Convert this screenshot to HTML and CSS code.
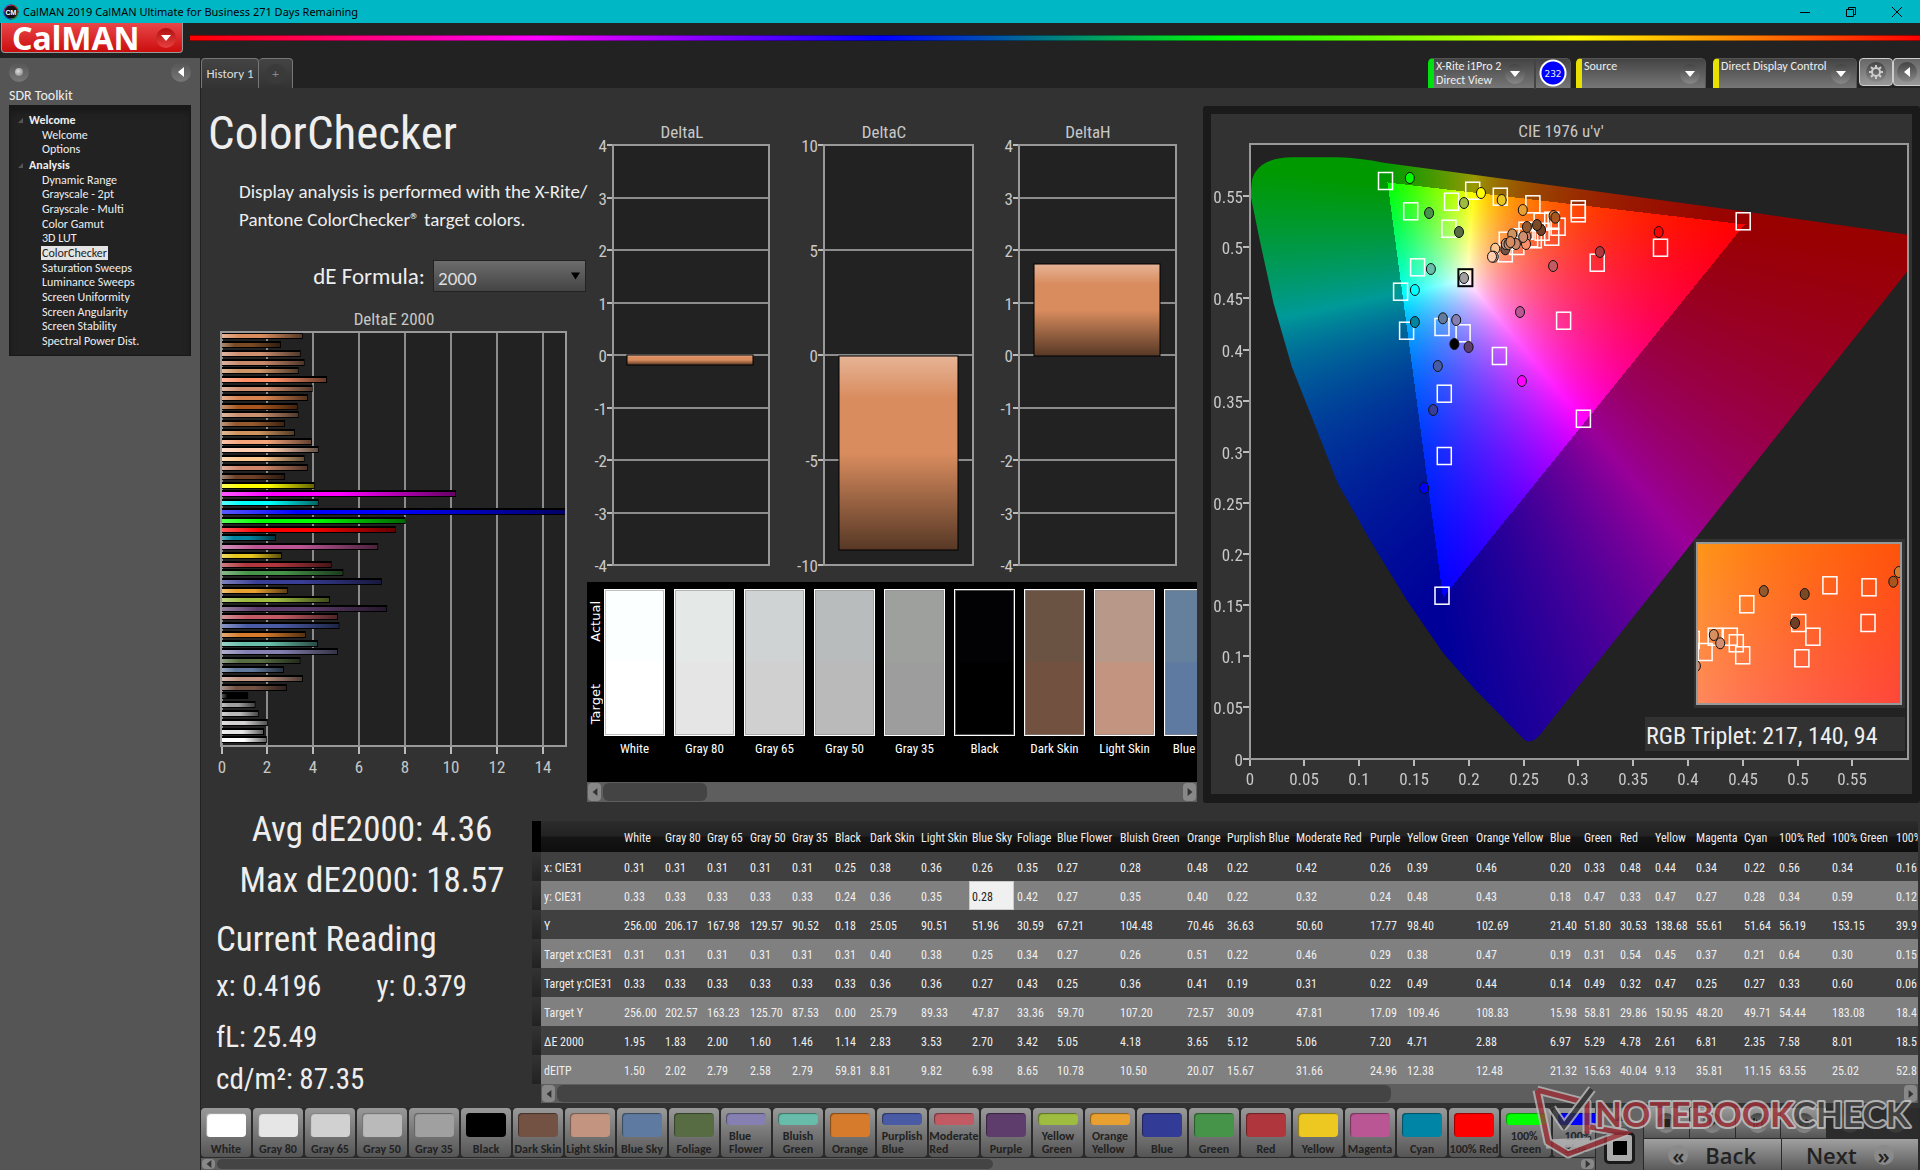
FILE: index.html
```html
<!DOCTYPE html>
<html lang="en">
<head>
<meta charset="utf-8">
<title>CalMAN 2019 CalMAN Ultimate for Business</title>
<link rel="stylesheet" href="styles.css">
</head>
<body>
<div class="app">
  <header class="titlebar">
    <svg class="app-icon" viewBox="0 0 16 16" aria-hidden="true"><circle cx="8" cy="8" r="7.500" fill="#111"/><path d="M1 8a7 7 0 0 1 7-7" stroke="#c33cc8" fill="none"/><path d="M8 1a7 7 0 0 1 7 7" stroke="#d03030" fill="none"/><path d="M15 8a7 7 0 0 1-7 7" stroke="#4a9a3a" fill="none"/><path d="M8 15a7 7 0 0 1-7-7" stroke="#3050d0" fill="none"/><text x="8" y="11" text-anchor="middle" class="icon-text">CM</text></svg>
    <span class="title-text">CalMAN 2019 CalMAN Ultimate for Business 271 Days Remaining</span>
    <div class="window-buttons">
      <button aria-label="Minimize"><svg viewBox="0 0 12 12"><path d="M1 6.500h10"/></svg></button>
      <button aria-label="Restore"><svg viewBox="0 0 12 12"><path d="M1.500 3.500h7v7h-7zM3.500 3.500v-2h7v7h-2"/></svg></button>
      <button aria-label="Close"><svg viewBox="0 0 12 12"><path d="M1 1l10 10M11 1L1 11"/></svg></button>
    </div>
  </header>
  <div class="brand-row">
    <button class="brand"><span>CalMAN</span><i class="round red"><svg viewBox="0 0 10 6"><path d="M0 0h10L5 6z"/></svg></i></button>
    <div class="spectrum"></div>
  </div>
  <div class="body">
    <aside class="sidebar">
      <div class="side-tools"><i class="round"><b class="led"></b></i><button class="round" aria-label="Collapse"><svg class="side-arrow" viewBox="0 0 6 10"><path d="M6 0v10L0 5z"/></svg></button></div>
      <h2>SDR Toolkit</h2>
      <nav class="tree">
        <h3>Welcome</h3>
        <ul><li><a href="#">Welcome</a></li><li><a href="#">Options</a></li></ul>
        <h3>Analysis</h3>
        <ul><li><a href="#">Dynamic Range</a></li><li><a href="#">Grayscale - 2pt</a></li><li><a href="#">Grayscale - Multi</a></li><li><a href="#">Color Gamut</a></li><li><a href="#">3D LUT</a></li><li><a href="#" class="current">ColorChecker</a></li><li><a href="#">Saturation Sweeps</a></li><li><a href="#">Luminance Sweeps</a></li><li><a href="#">Screen Uniformity</a></li><li><a href="#">Screen Angularity</a></li><li><a href="#">Screen Stability</a></li><li><a href="#">Spectral Power Dist.</a></li></ul>
      </nav>
    </aside>
    <main class="main">
      <div class="tabbar">
        <button class="tab">History 1</button><button class="tab add" aria-label="Add history"><i class="round dim">+</i></button>
        <div class="devices">
          <button class="device meter"><span>X-Rite i1Pro 2<br>Direct View</span><i class="round"><svg viewBox="0 0 10 6"><path d="M0 0h10L5 6z"/></svg></i><em>232</em></button>
          <button class="device source"><span>Source</span><i class="round"><svg viewBox="0 0 10 6"><path d="M0 0h10L5 6z"/></svg></i></button>
          <button class="device display"><span>Direct Display Control</span><i class="round"><svg viewBox="0 0 10 6"><path d="M0 0h10L5 6z"/></svg></i></button>
          <button class="square gear" aria-label="Settings"><i class="round"><svg class="gear-icon" viewBox="0 0 16 16"><circle cx="8" cy="8" r="4"/><path d="M8 1v3M8 12v3M1 8h3M12 8h3M3 3l2 2M11 11l2 2M13 3l-2 2M5 11l-2 2"/></svg></i></button>
          <button class="square expand" aria-label="Expand"><i class="round"><svg class="side-arrow" viewBox="0 0 6 10"><path d="M6 0v10L0 5z"/></svg></i></button>
        </div>
      </div>
      <section class="charts">
        <div class="intro">
          <h1>ColorChecker</h1>
          <p>Display analysis is performed with the X-Rite/<br>Pantone ColorChecker® target colors.</p>
          <div class="formula"><label for="formula">dE Formula:</label><div class="select"><select id="formula"><option>2000</option></select><svg viewBox="0 0 10 8"><path d="M0 0h10L5 8z"/></svg></div></div>
          <svg class="chart" id="deltaE" viewBox="201 310 386 476"></svg>
        </div>
        <div class="middle">
          <svg class="chart" id="deltas" viewBox="587 118 616 464"></svg>
          <div class="compare">
            <div class="compare-view">
              <div class="sides"><span>Actual</span><span>Target</span></div>
              <div class="pairs" id="pairs"></div>
            </div>
            <div class="scrollbar tall"><button aria-label="Scroll left"><svg viewBox="0 0 6 10"><path d="M6 0v10L0 5z"/></svg></button><div class="track"><div class="thumb compare-thumb"></div></div><button aria-label="Scroll right"><svg viewBox="0 0 6 10"><path d="M0 0v10L6 5z"/></svg></button></div>
          </div>
        </div>
        <div class="gamut"><svg class="chart" id="cie" viewBox="1203 106 717 697"></svg></div>
      </section>
      <section class="results">
        <div class="readings">
          <div class="totals">Avg dE2000: 4.36<br>Max dE2000: 18.57</div>
          <h2>Current Reading</h2>
          <div class="reading xy"><span>x: 0.4196</span><span>y: 0.379</span></div>
          <div class="reading">fL: 25.49</div>
          <div class="reading last">cd/m²: 87.35</div>
        </div>
        <div class="data">
          <div class="row-heads"></div>
          <div class="table-view">
            <div class="table-clip"><table id="table"></table></div>
            <div class="scrollbar"><button aria-label="Scroll left"><svg viewBox="0 0 6 10"><path d="M6 0v10L0 5z"/></svg></button><div class="track"><div class="thumb table-thumb"></div></div><button aria-label="Scroll right"><svg viewBox="0 0 6 10"><path d="M0 0v10L6 5z"/></svg></button></div>
          </div>
        </div>
      </section>
      <footer class="footer">
        <div class="patch-area">
          <div class="patches" id="patches"></div>
          <div class="scrollbar short"><button aria-label="Scroll left"><svg viewBox="0 0 6 10"><path d="M6 0v10L0 5z"/></svg></button><div class="track"><div class="thumb patch-thumb"></div></div><button aria-label="Scroll right"><svg viewBox="0 0 6 10"><path d="M0 0v10L6 5z"/></svg></button></div>
        </div>
        <div class="window-tools"><button class="up" aria-label="Show more"><svg viewBox="0 0 10 6"><path d="M0 6h10L5 0z"/></svg></button><button class="pattern" aria-label="Pattern window"><b></b></button></div>
        <div class="transport">
          <div class="media">
            <button aria-label="Stop"><i class="round"><svg viewBox="0 0 10 10"><path d="M1 1h8v8H1z"/></svg></i></button>
            <button aria-label="Play"><i class="round"><svg viewBox="0 0 10 10"><path d="M2 0l7 5-7 5z"/></svg></i></button>
            <button aria-label="Read series"><i class="round"><svg viewBox="0 0 10 10"><path d="M0 0h2v10H0zM8 0h2v10H8zM3 1l4 4-4 4z"/></svg></i></button>
            <button aria-label="Continuous"><i class="round"><svg viewBox="0 0 10 10"><path d="M0 3l3-2 2 3 2-3 3 2v4L7 9 5 6 3 9 0 7z"/></svg></i></button>
            <button class="off" aria-label="Previous"><i class="round dim"></i></button>
            <button class="off" aria-label="Next reading"><i class="round dim"></i></button>
          </div>
          <div class="steps">
            <button><i class="round">«</i><span>Back</span></button>
            <button><span>Next</span><i class="round">»</i></button>
          </div>
        </div>
        <svg class="watermark" viewBox="1530 1082 390 78" aria-hidden="true">
          <path d="M1537 1090l50 13v31M1537 1090l11 52 20 12 56-21-34-6M1546 1144l44-2" class="mark-halo"/>
          <path d="M1537 1090l50 13v31M1537 1090l11 52 20 12 56-21-34-6" class="mark-red"/>
          <path d="M1552 1108l12 18 28-37" class="mark-halo"/>
          <path d="M1552 1108l12 18 28-37" class="mark-dark"/>
          <text x="1595" y="1127" class="mark-text"><tspan class="nb">NOTEBOOK</tspan><tspan class="ck">CHECK</tspan></text>
        </svg>
      </footer>
    </main>
  </div>
</div>
<script src="script.js"></script>
</body>
</html>
```
FILE: styles.css
```css
* { box-sizing: border-box; }
body { margin: 0; background: #323232; color: #eee; font-family: Carlito, Lato, sans-serif; font-size: 12px; }
button { font: inherit; color: inherit; border: 0; padding: 0; margin: 0; background: none; }
h1, h2, h3, p, ul { margin: 0; padding: 0; font-weight: 400; }
a { color: inherit; text-decoration: none; }
ul { list-style: none; }
i, em { font-style: normal; }
svg { display: block; }
.app { min-height: 100vh; display: flex; flex-direction: column; overflow: hidden; }

.titlebar { height: 23px; background: #00b7c6; color: #000; display: flex; align-items: center; padding-left: 3px; }
.app-icon { width: 16px; height: 16px; }
.icon-text { font: 700 7px "Liberation Sans", sans-serif; fill: #fff; }
.title-text { margin-left: 4px; font: 11px/16px "Noto Sans", sans-serif; flex: 1; }
.window-buttons { display: flex; }
.window-buttons button { width: 46px; height: 23px; display: grid; place-items: center; }
.window-buttons svg { width: 12px; height: 12px; fill: none; stroke: #000; }

.brand-row { height: 35px; background: #222; display: flex; }
.brand { width: 182px; height: 30px; margin: 0 7px 0 1px; background: linear-gradient(#e8474a, #cc0d0d); border: 1px solid #999; border-top: 0; border-radius: 0 0 4px 4px; display: flex; align-items: center; justify-content: space-between; padding: 0 6px 0 10px; }
.brand span { font: 700 32px/28px "Noto Sans", sans-serif; color: #fff; }
.spectrum { flex: 1; height: 6px; margin-top: 12px; background: linear-gradient(90deg, #f00, #f0f, #00f, #0f0, #ff0, #f00); border: solid #0006; border-width: 1px 0; }

.round { width: 20px; height: 20px; border-radius: 50%; background: linear-gradient(#444, #888); display: grid; place-items: center; flex: none; }
.round svg { width: 10px; height: 6px; fill: #fff; }
.round.red { background: linear-gradient(#b01010, #e84040); }
.round.dim { background: #3a3a3a; color: #888; }
.round .side-arrow { width: 6px; height: 10px; }
.led { width: 8px; height: 8px; border-radius: 50%; background: radial-gradient(circle at 40% 40%, #ddd, #777); }

.body { flex: 1; display: flex; }
.sidebar { width: 201px; flex: none; background: #555; border-right: 1px solid #222; padding: 4px 9px 0; }
.side-tools { height: 20px; display: flex; justify-content: space-between; }
.side-tools .round { background: linear-gradient(#555, #777); }
.sidebar h2 { font-size: 14px; line-height: 18px; margin-top: 5px; }
.tree { height: 251px; background: #222; border: 1px solid #181818; box-shadow: inset 0 6px 6px #1118; padding: 6px 0 0 11px; }
.tree h3 { font-size: 12px; line-height: 16px; font-weight: 700; padding-left: 8px; position: relative; }
.tree h3::before { content: ""; position: absolute; left: -3px; top: 6px; border-left: 5px solid transparent; border-bottom: 5px solid #555; }
.tree ul { padding-left: 20px; }
.tree li { height: 15px; line-height: 15px; padding: 0 1px; }
.tree li:nth-child(3n+1) { height: 14px; }
.tree .current { display: inline-block; background: #e4e4e4; color: #222; padding: 0 1px; margin-left: -1px; line-height: 14px; }

.main { flex: 1; min-width: 0; display: flex; flex-direction: column; }
.tabbar { height: 30px; background: #222; display: flex; }
.tab { width: 58px; background: linear-gradient(#444, #333); border: 1px solid #777; border-bottom: 0; border-radius: 4px 4px 0 0; font-size: 13px; color: #ddd; }
.tab.add { width: 34px; display: grid; place-items: center; border-left: 0; }
.devices { margin-left: auto; display: flex; }
.device { display: flex; text-align: left; background: linear-gradient(#444, #777); border: 1px solid #555; border-bottom: 0; border-left: 6px solid #e8e000; border-radius: 5px 5px 0 0; margin-right: 7px; align-items: center; line-height: 14px; font-size: 12px; }
.device span { flex: 1; align-self: start; padding-left: 2px; white-space: nowrap; }
.device .round { margin-right: 5px; }
.meter { width: 143px; border-left-color: #00e010; margin-right: 5px; }
.meter .round { margin-right: 9px; }
.meter em { width: 36px; height: 30px; border-left: 2px solid #444; display: grid; place-items: center; background: radial-gradient(circle at 17px 14px, #00f 11px, #fff 12px, #fff 13px, transparent 14px); font: 9px "DejaVu Sans", sans-serif; }
.source { width: 130px; }
.display { width: 144px; margin-right: 2px; }
.square { width: 34px; height: 28px; background: linear-gradient(#666, #999); border: 1px solid #ccc; border-radius: 4px; display: grid; place-items: center; }
.expand { width: 27px; border-right: 0; border-radius: 4px 0 0 4px; }
.round .gear-icon { width: 16px; height: 16px; fill: none; stroke: #ccc; stroke-width: 2; }

.charts { display: grid; grid-template-columns: minmax(0, 386fr) minmax(0, 616fr) minmax(0, 717fr); }
.chart { width: 100%; height: auto; }
.intro { padding-top: 15px; }
.intro h1 { font: 47px/60px "Roboto Condensed", sans-serif; padding-left: 7px; }
.intro p { font-size: 19px; line-height: 28px; padding: 15px 0 0 38px; white-space: nowrap; }
.formula { display: flex; justify-content: flex-end; align-items: center; gap: 8px; height: 32px; margin: 26px 1px 18px 0; }
.formula label { font-size: 23px; }
.select { width: 153px; height: 32px; position: relative; }
.select select { appearance: none; width: 100%; height: 100%; background: linear-gradient(#6c6c6c, #444); border: 1px solid #222; color: #ddd; font: 19px Carlito, sans-serif; padding: 4px 4px 0; }
.select svg { position: absolute; right: 6px; top: 12px; width: 9px; height: 8px; }

.panel { fill: #323232; }
.plot { fill: #222; }
.grid { stroke: #8c8c8c; stroke-width: 2; }
.frame { fill: none; stroke: #999; stroke-width: 2; }
.tick { stroke: #bbb; stroke-width: 2; }
.label { font: 17px "Roboto Condensed", sans-serif; fill: #c8c8c8; }
.triplet { font: 24px "Roboto Condensed", sans-serif; fill: #eee; }
.end { text-anchor: end; }
.mid { text-anchor: middle; }
.target { fill: none; stroke: #fff; stroke-width: 1.500px; }
.target.white { stroke: #000; stroke-width: 2px; }
.actual { stroke: #111; stroke-width: 1px; }

.middle { padding-top: 30px; }
.compare { margin-right: 6px; background: #000; }
.compare-view { height: 200px; display: flex; overflow: hidden; padding-top: 7px; }
.sides { width: 17px; height: 147px; padding: 12px 0; flex: none; display: flex; flex-direction: column; justify-content: space-between; align-items: center; }
.sides span { writing-mode: vertical-rl; transform: rotate(180deg); font: 13px/16px "DejaVu Sans", sans-serif; color: #fff; }
.pairs { display: flex; gap: 9px; overflow: hidden; }
.pair { width: 61px; flex: none; text-align: center; font: 13px/26px "Roboto Condensed", sans-serif; color: #fff; white-space: nowrap; }
.pair div { height: 147px; border: 1px solid #fff; outline: 1px solid #8888; outline-offset: -2px; }

.scrollbar { height: 19px; background: #5e5e5e; display: flex; align-items: center; padding: 1px; gap: 2px; }
.scrollbar.tall { height: 20px; }
.scrollbar.short { height: 12px; }
.scrollbar button { width: 13px; height: 100%; background: #888; border-radius: 4px; display: grid; place-items: center; }
.scrollbar svg { height: 8px; width: 6px; fill: #333; }
.track { flex: 1; height: 100%; }
.thumb { height: 100%; background: #444; border-radius: 6px; }
.compare-thumb { width: 18%; }
.table-thumb { width: 62%; }
.patch-thumb { width: 57%; }

.gamut { padding-top: 18px; }
.results { flex: 1; display: flex; }
.readings { width: 331px; flex: none; padding: 1px 0 0 15px; font: 29px/40px "Roboto Condensed", sans-serif; }
.totals { font-size: 35px; line-height: 51px; text-align: center; margin-left: -4px; }
.readings h2 { font-size: 35px; line-height: 44px; margin-top: 12px; }
.reading { margin-top: 11px; }
.reading.xy { display: flex; gap: 55px; margin-top: 4px; }
.reading.last { margin-top: 2px; }
.data { flex: 1; min-width: 0; display: flex; padding: 18px 2px 0 0; }
.row-heads { width: 9px; height: 263px; background: linear-gradient(#000 31px, transparent 31px), repeating-linear-gradient(#333 31px, #222 60px); }
.table-view { flex: 1; min-width: 0; }
.table-clip { overflow: hidden; background: linear-gradient(#2c2c2c, #222 15px, #141414 16px, #0e0e0e 31px); }
table { table-layout: fixed; border-collapse: collapse; font: 12px/16px "Roboto Condensed", sans-serif; }
th, td { padding: 2px 0 0 3px; text-align: left; font-weight: 400; white-space: nowrap; height: 29px; }
thead th { height: 31px; }
tbody tr { background: #404040; }
tbody tr:nth-child(even) { background: #808080; }
tbody .selected { background: #f0f0f0; color: #222; box-shadow: inset 0 0 0 1px #ccc; }

.footer { display: flex; height: 62px; position: relative; background: #2a2a2a; }
.patch-area { flex: 1; min-width: 0; }
.patches { display: flex; gap: 2px; height: 50px; overflow: hidden; }
.patch { width: 50px; height: 49px; flex: none; padding: 5px 0 1px; border-radius: 4px; background: linear-gradient(#999, #555); color: #222; font-weight: 700; font-size: 12px; line-height: 13px; display: flex; flex-direction: column; align-items: center; justify-content: space-between; text-align: left; white-space: nowrap; }
.patch i { width: 40px; height: 24px; border-radius: 4px; box-shadow: inset 1px 1px 1px #0006; }
.patch.two i { height: 12px; }
.window-tools { width: 49px; background: #555; border: solid #2a2a2a; border-width: 0 1px; display: flex; flex-direction: column; align-items: center; gap: 5px; padding-bottom: 6px; }
.up { width: 100%; height: 19px; background: #666; display: grid; place-items: center; }
.up svg { width: 10px; height: 6px; fill: #222; }
.pattern { width: 31px; height: 32px; border: 3px solid #1a1a1a; border-radius: 5px; background: #aaa; display: grid; place-items: center; }
.pattern b { width: 14px; height: 14px; background: #000; }
.transport { width: 276px; padding-right: 2px; }
.media { display: grid; grid-template-columns: repeat(6, 1fr); gap: 1px; height: 30px; }
.media button { background: linear-gradient(#999, #555); display: grid; place-items: center; }
.media .off { background: #2c2c2c; }
.media svg { width: 10px; height: 10px; fill: #222; }
.steps { display: grid; grid-template-columns: 1fr 1fr; gap: 1px; height: 31px; margin-top: 1px; }
.steps button { background: linear-gradient(#a0a0a0, #5a5a5a); color: #222; font: 600 22px/28px "Open Sans", sans-serif; display: flex; align-items: center; justify-content: center; gap: 17px; }
.steps .round { background: #8a8a8a; line-height: 18px; }

.watermark { position: absolute; right: 0; bottom: 10px; width: 390px; height: 78px; pointer-events: none; opacity: 0.8; }
.mark-halo { fill: none; stroke: #bbb; stroke-width: 9px; stroke-linejoin: round; }
.mark-red { fill: none; stroke: #a03038; stroke-width: 5px; }
.mark-dark { fill: none; stroke: #333; stroke-width: 5px; }
.mark-text { font: 700 35px Lato, sans-serif; paint-order: stroke; stroke: #c8c8c8; stroke-width: 4px; stroke-linejoin: round; }
.nb { fill: #a03038; }
.ck { fill: #444; }
```
FILE: script.js
```js
const $ = id => document.getElementById(id);

// DeltaE bars, top to bottom: value and patch colour
const bars = [[3.52,'#d98c5e'],[2.57,'#7a4a25'],[3.43,'#cd8f70'],[3.6,'#c8886a'],[3.34,'#cd9468'],[4.58,'#ff9068'],[3.95,'#d08f70'],[3.74,'#d6824f'],[3.3,'#a8561d'],[3.34,'#c9906f'],[2.75,'#94582e'],[3.18,'#cf945e'],[3.91,'#f5a47a'],[4.21,'#ffcdb0'],[3.6,'#ffc890'],[3.74,'#cd8468'],[2.75,'#6f4028'],[4.04,'#ff0'],[10.2,'#f0f'],[4.21,'#0ff'],[15,'#00f'],[8.01,'#0f0'],[7.58,'#f00'],[2.35,'#0085a1'],[6.81,'#bb5695'],[2.61,'#e7c71f'],[4.78,'#af363c'],[5.29,'#469449'],[6.97,'#383d96'],[2.88,'#e8a030'],[4.71,'#9dbc40'],[7.2,'#5e3c6c'],[5.06,'#c15a63'],[5.12,'#4a5ba6'],[3.65,'#d67b2c'],[4.18,'#67bda9'],[5.05,'#8580b1'],[3.42,'#576c43'],[2.7,'#627a9d'],[3.53,'#c29682'],[2.83,'#735244'],[1.14,'#000'],[1.46,'#a0a0a0'],[1.6,'#bababa'],[2,'#d2d0d0'],[1.83,'#e6e6e6'],[1.95,'#fff']];

const shade = (id, x2, y2) => `<linearGradient id="${id}" x1="0" y1="0" x2="${x2}" y2="${y2}"><stop offset="0" stop-color="#fff" stop-opacity=".35"/><stop offset=".22" stop-color="#fff" stop-opacity="0"/><stop offset=".5" stop-color="#000" stop-opacity="0"/><stop offset="1" stop-color="#000" stop-opacity=".6"/></linearGradient>`;
const line = (x1, y1, x2, y2, c) => `<line x1="${x1}" y1="${y1}" x2="${x2}" y2="${y2}" class="${c}"/>`;
const text = (x, y, t, c) => `<text x="${x}" y="${y}" class="${c}">${t}</text>`;
const rect = (x, y, w, h, a) => `<rect x="${x}" y="${y}" width="${w}" height="${h}" ${a}/>`;

function drawDeltaE() {
  const unit = 22.93, x0 = 221.5;
  let s = `<defs>${shade('fadeX', 1, 0)}</defs>` + text(394, 325, 'DeltaE 2000', 'label mid') + rect(221, 332, 345, 414, 'class="plot"');
  for (let v = 0; v < 15; v += 2) {
    const x = Math.round(x0 + v * unit);
    s += line(x, 332, x, 746, 'grid') + line(x, 746, x, 754, 'tick') + text(x, 773, v, 'label mid');
  }
  bars.forEach(([v, c], i) => {
    const y = Math.round(336.3 + i * 8.783) - 4, w = v * unit;
    s += rect(221, y, w + 1, 7, 'fill="#000"') + rect(222, y + 2, w - 1, 4, `fill="${c}"`) + rect(222, y + 2, w - 1, 4, 'fill="url(#fadeX)"');
  });
  $('deltaE').innerHTML = s + rect(221, 332, 345, 414, 'class="frame"');
}

function drawDeltas() {
  let s = `<defs>${shade('fadeY', 0, 1)}</defs>`;
  const plots = [['DeltaL', 682, 613, 769, 4, 1, 627, 126, 355, 10], ['DeltaC', 884, 824, 973, 10, 5, 839, 119, 356, 194], ['DeltaH', 1088, 1019, 1176, 4, 1, 1034, 126, 264, 92]];
  for (const [name, cx, x1, x2, max, step, bx, bw, by, bh] of plots) {
    s += text(cx, 138, name, 'label mid') + rect(x1, 145, x2 - x1, 420, 'class="plot"');
    for (let v = -max; v <= max; v += step) {
      const y = Math.round(355 - v / max * 210);
      s += line(x1, y, x2, y, 'grid') + line(x1 - 6, y, x1, y, 'tick') + text(x1 - 6, y + 7, v, 'label end');
    }
    s += rect(x1, 145, x2 - x1, 420, 'class="frame"') + rect(bx, by, bw, bh, 'fill="#d98c5e"') + rect(bx, by, bw, bh, 'fill="url(#fadeY)" stroke="#000"');
  }
  $('deltas').innerHTML = s;
}

// Chromaticity diagram
const locus = 'M1250.500 195L1252 180Q1254 173 1257 170Q1266 158 1292 157.300L1337.700 157.300Q1360 158 1383.700 162.700L1475.500 175L1746.400 211.700L1933.400 238.500L1741.800 480L1539.800 735Q1529 747 1521.400 736.700L1498.400 713.300L1475.500 690L1443.300 653.300L1406.600 600L1369.900 540L1337.700 483.300L1320.800 440L1291.800 366.700L1273.500 303.300L1259.700 240Z';
const targets = [[404,243],[594,272],[654,290],[548,305],[725,313],[459,334],[824,328],[824,340],[1183,364],[542,386],[780,380],[766,362],[743,365],[710,392],[695,412],[667,422],[720,415],[728,418],[745,395],[766,410],[690,438],[665,460],[1003,443],[865,488],[474,502],[437,575],[450,692],[527,681],[573,700],[652,768],[792,662],[532,881],[835,956],[532,1068],[527,1487]];
const actuals = [[457,234,'#0f0'],[612,279,'#ff0'],[575,309,'#9dbc40'],[657,300,'#e7c71f'],[703,330,'#e8a030'],[499,339,'#469449'],[564,396,'#576c43'],[770,348,'#d67b2c'],[774,353,'#a8561d'],[743,390,'#6f4028'],[734,375,'#7a4a25'],[711,410,'#cd8468'],[712,381,'#94582e'],[680,403,'#cf945e'],[710,432,'#ff9068'],[704,411,'#cd8f70'],[688,432,'#c8886a'],[665,448,'#735244'],[643,446,'#ffc890'],[640,470,'#f5a47a'],[636,470,'#ffcdb0'],[666,432,'#c29682'],[672,432,'#c9906f'],[676,426,'#d98c5e'],[871,456,'#af363c'],[999,396,'#f00'],[769,498,'#c15a63'],[503,507,'#67bda9'],[468,570,'#0ff'],[468,666,'#0085a1'],[529,655,'#627a9d'],[558,660,'#8580b1'],[554,732,'#000'],[585,741,'#5e3c6c'],[518,798,'#4a5ba6'],[508,930,'#383d96'],[697,636,'#bb5695'],[701,843,'#f0f'],[575,534,'#a0a0a0'],[488,1164,'#00f']];
const nearTargets = [[1372,436],[1457,442],[1191,493],[1304,549],[1455,549],[1335,590],[1122,590],[1155,590],[1168,610],[1182,646],[1100,636],[1072,600],[1311,655]];
const nearActuals = [[1228,453,'#94582e'],[1317,462,'#7a4a25'],[1296,549,'#6f4028'],[1119,585,'#d8905e'],[1133,610,'#d08f70'],[1522,396,'#d67b2c'],[1510,425,'#a8561d'],[1080,678,'#cd8468']];
const px = (x, top, y) => [1200 + x / 2.178, top + y / 3];
const box = (x, y, c = 'target') => rect((x - 7).toFixed(1), (y - 8.5).toFixed(1), 14, 17, `class="${c}"`);
const dot = (x, y, c) => `<ellipse cx="${x.toFixed(1)}" cy="${y.toFixed(1)}" rx="4.5" ry="5.5" fill="${c}" class="actual"/>`;

function drawCie() {
  let s = rect(1203, 106, 717, 697, 'rx="3" fill="#1a1a1a"') + rect(1211, 114, 701, 680, 'class="panel"') + text(1561, 137, "CIE 1976 u'v'", 'label mid') + rect(1250, 144, 658, 615, 'class="plot"');
  s += '<foreignObject x="1250" y="145" width="658" height="614"><canvas width="658" height="614" id="gamutFill"></canvas></foreignObject>';
  for (let i = 0; i < 12; i++) {
    const t = String(+(i * 0.05).toFixed(2)), x = Math.round(1249.5 + i * 54.8), y = Math.round(758.5 - i * 51.12);
    s += line(x, 759, x, 766, 'tick') + text(x, 785, t, 'label mid') + line(1243, y, 1250, y, 'tick') + text(1243, y + 7, t, 'label end');
  }
  s += rect(1250, 144, 658, 615, 'class="frame"');
  targets.forEach(([x, y]) => s += box(...px(x, 100, y)));
  s += box(...px(578, 100, 533), 'target white');
  actuals.forEach(([x, y, c]) => s += dot(...px(x, 100, y), c));
  s += rect(1694, 539, 211, 169, 'class="panel"') + '<foreignObject x="1697" y="543" width="204" height="161"><canvas width="204" height="161" id="nearFill"></canvas></foreignObject>';
  s += '<clipPath id="near"><rect x="1697" y="543" width="204" height="161"/></clipPath><g clip-path="url(#near)">';
  nearTargets.forEach(([x, y]) => s += box(...px(x, 440, y)));
  nearActuals.forEach(([x, y, c]) => s += dot(...px(x, 440, y), c));
  s += '</g>' + rect(1697, 543, 204, 161, 'class="frame"') + rect(1645, 717, 260, 34, 'class="panel"') + text(1646, 744, 'RGB Triplet: 217, 140, 94', 'triplet');
  $('cie').innerHTML = s;
  const cross = (a, b, x, y) => (b[0] - a[0]) * (y - a[1]) - (b[1] - a[1]) * (x - a[0]);
  const G = [1387, 182], R = [1744, 224], B = [1442.5, 597];
  const paint = (cv, ox, oy, k) => {
    const ctx = cv.getContext('2d'), img = ctx.createImageData(cv.width, cv.height);
    for (let j = 0, p = 0; j < cv.height; j++) for (let i = 0; i < cv.width; i++, p += 4) {
      const X0 = ox + i / k, Y0 = oy + j / k, u = (X0 - 1249.5) / 1096, v = Math.max((758.5 - Y0) / 1022.4, 0.005);
      const X = 9 * u / (4 * v), Z = (12 - 3 * u - 20 * v) / (4 * v);
      const c = [3.2406 * X - 1.5372 - 0.4986 * Z, -0.9689 * X + 1.8758 + 0.0415 * Z, 0.0557 * X - 0.204 + 1.057 * Z].map(n => Math.max(n, 0));
      const m = Math.max(...c), inside = cross(G, R, X0, Y0) >= 0 && cross(R, B, X0, Y0) >= 0 && cross(B, G, X0, Y0) >= 0;
      c.forEach((n, q) => img.data[p + q] = 255 * n / m * (inside ? 1 : 0.6));
      img.data[p + 3] = 255;
    }
    ctx.putImageData(img, 0, 0);
  };
  paint($('gamutFill'), 1250, 145, 1);
  const ctx = $('gamutFill').getContext('2d');
  ctx.globalCompositeOperation = 'destination-in';
  ctx.translate(-1250, -145);
  ctx.fill(new Path2D(locus));
  paint($('nearFill'), 1510, 212, 4);
}

// Side-by-side swatches: name, measured, target
const pairs = [['White','#fcffff','#fff'],['Gray 80','#e4e8e7','#e6e5e5'],['Gray 65','#cfd3d4','#d1d0d0'],['Gray 50','#b8bcbd','#bababa'],['Gray 35','#9ea09e','#9e9d9d'],['Black','#020205','#000'],['Dark Skin','#6b5344','#735141'],['Light Skin','#b89989','#c39580'],['Blue Sky','#64809c','#5f7aa0']];
$('pairs').innerHTML = pairs.map(([n, a, t]) => `<div class="pair"><div style="background:linear-gradient(${a} 50%,${t} 50%)"></div>${n}</div>`).join('');

const names = ['White','Gray 80','Gray 65','Gray 50','Gray 35','Black','Dark Skin','Light Skin','Blue Sky','Foliage','Blue Flower','Bluish Green','Orange','Purplish Blue','Moderate Red','Purple','Yellow Green','Orange Yellow','Blue','Green','Red','Yellow','Magenta','Cyan','100% Red','100% Green','100% Blue'];
const rows = {
  'x: CIE31': '0.31 0.31 0.31 0.31 0.31 0.25 0.38 0.36 0.26 0.35 0.27 0.28 0.48 0.22 0.42 0.26 0.39 0.46 0.20 0.33 0.48 0.44 0.34 0.22 0.56 0.34 0.16',
  'y: CIE31': '0.33 0.33 0.33 0.33 0.33 0.24 0.36 0.35 0.28 0.42 0.27 0.35 0.40 0.22 0.32 0.24 0.48 0.43 0.18 0.47 0.33 0.47 0.27 0.28 0.34 0.59 0.12',
  'Y': '256.00 206.17 167.98 129.57 90.52 0.18 25.05 90.51 51.96 30.59 67.21 104.48 70.46 36.63 50.60 17.77 98.40 102.69 21.40 51.80 30.53 138.68 55.61 51.64 56.19 153.15 39.9',
  'Target x:CIE31': '0.31 0.31 0.31 0.31 0.31 0.31 0.40 0.38 0.25 0.34 0.27 0.26 0.51 0.22 0.46 0.29 0.38 0.47 0.19 0.31 0.54 0.45 0.37 0.21 0.64 0.30 0.15',
  'Target y:CIE31': '0.33 0.33 0.33 0.33 0.33 0.33 0.36 0.36 0.27 0.43 0.25 0.36 0.41 0.19 0.31 0.22 0.49 0.44 0.14 0.49 0.32 0.47 0.25 0.27 0.33 0.60 0.06',
  'Target Y': '256.00 202.57 163.23 125.70 87.53 0.00 25.79 89.33 47.87 33.36 59.70 107.20 72.57 30.09 47.81 17.09 109.46 108.83 15.98 58.81 29.86 150.95 48.20 49.71 54.44 183.08 18.4',
  'ΔE 2000': '1.95 1.83 2.00 1.60 1.46 1.14 2.83 3.53 2.70 3.42 5.05 4.18 3.65 5.12 5.06 7.20 4.71 2.88 6.97 5.29 4.78 2.61 6.81 2.35 7.58 8.01 18.5',
  'dEITP': '1.50 2.02 2.79 2.58 2.79 59.81 8.81 9.82 6.98 8.65 10.78 10.50 20.07 15.67 31.66 24.96 12.38 12.48 21.32 15.63 40.04 9.13 35.81 11.15 63.55 25.02 52.8'
};
const widths = [80,41,42,43,42,43,35,51,51,45,40,63,67,40,69,74,37,69,74,34,36,35,41,48,35,53,64,66];
$('table').style.width = widths.reduce((a, b) => a + b) + 'px';
$('table').innerHTML = '<colgroup>' + widths.map(w => `<col style="width:${w}px">`).join('') + '</colgroup><thead><tr><th></th>' + names.map(n => `<th scope="col">${n}</th>`).join('') + '</tr></thead><tbody>' +
  Object.entries(rows).map(([h, r], i) => `<tr><th scope="row">${h}</th>` + r.split(' ').map((v, j) => `<td${i === 1 && j === 8 ? ' class="selected"' : ''}>${v}</td>`).join('') + '</tr>').join('') + '</tbody>';

const patchColors = ['#fff','#e6e6e6','#d1d1d1','#bababa','#a0a0a0','#000','#735244','#c39580','#5f7aa0','#576c43','#8580b1','#67bda9','#d67b2c','#4a5ba6','#c15a63','#5e3c6c','#9dbc40','#e8a030','#323c96','#469449','#af363c','#edc821','#bb5695','#0085a6','#f00','#0f0','#00f'];
const wrapped = ['Blue Flower','Bluish Green','Purplish Blue','Moderate Red','Yellow Green','Orange Yellow','100% Green','100% Blue'];
$('patches').innerHTML = names.map((n, i) => {
  const two = wrapped.includes(n);
  return `<button class="patch${two ? ' two' : ''}"><i style="background:${patchColors[i]}"></i><span>${two ? n.replace(' ', '<br>') : n}</span></button>`;
}).join('');

drawDeltaE();
drawDeltas();
drawCie();
```
